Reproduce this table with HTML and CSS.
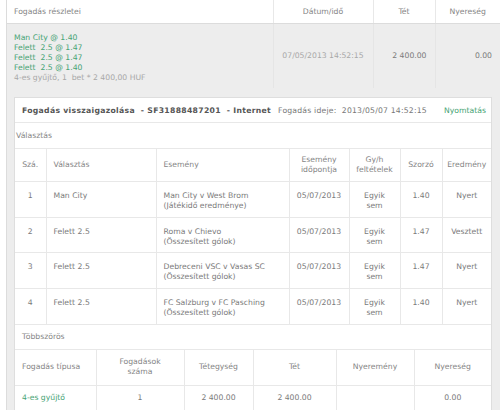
FILE: index.html
```html
<!DOCTYPE html>
<html lang="hu">
<head>
<meta charset="utf-8">
<link rel="stylesheet" href="styles.css">
</head>
<body>
<div class="page">
  <table class="summary">
    <colgroup><col class="s1"><col class="s2"><col class="s3"><col class="s4"></colgroup>
    <tr class="sum-head">
      <th class="left">Fogadás részletei</th>
      <th>Dátum/idő</th>
      <th>Tét</th>
      <th>Nyereség</th>
    </tr>
    <tr class="sum-row">
      <td class="legs">
        <div class="green">Man City @ 1.40</div>
        <div class="green">Felett&nbsp; 2.5 @ 1.47</div>
        <div class="green">Felett&nbsp; 2.5 @ 1.47</div>
        <div class="green">Felett&nbsp; 2.5 @ 1.40</div>
        <div class="faint">4-es gyűjtő, 1&nbsp; bet * 2 400,00 HUF</div>
      </td>
      <td class="center faint">07/05/2013 14:52:15</td>
      <td class="right">2 400.00</td>
      <td class="right">0.00</td>
    </tr>
  </table>

  <div class="panel">
    <div class="panel-head">
      <span class="title">Fogadás visszaigazolása&nbsp; - SF31888487201&nbsp; - Internet</span>
      <span class="time">Fogadás ideje:&nbsp; 2013/05/07 14:52:15</span>
      <span class="print">Nyomtatás</span>
    </div>
    <div class="section sec-a">Választás</div>
    <table class="sel">
      <colgroup><col class="c1"><col class="c2"><col class="c3"><col class="c4"><col class="c5"><col class="c6"><col class="c7"></colgroup>
      <tr class="head">
        <th>Szá.</th>
        <th class="left">Választás</th>
        <th class="left">Esemény</th>
        <th>Esemény<br>időpontja</th>
        <th>Gy/h<br>feltételek</th>
        <th>Szorzó</th>
        <th>Eredmény</th>
      </tr>
      <tr>
        <td>1</td><td class="left">Man City</td><td class="left">Man City v West Brom<br>(Játékidő eredménye)</td><td>05/07/2013</td><td>Egyik<br>sem</td><td>1.40</td><td>Nyert</td>
      </tr>
      <tr>
        <td>2</td><td class="left">Felett 2.5</td><td class="left">Roma v Chievo<br>(Összesített gólok)</td><td>05/07/2013</td><td>Egyik<br>sem</td><td>1.47</td><td>Vesztett</td>
      </tr>
      <tr>
        <td>3</td><td class="left">Felett 2.5</td><td class="left">Debreceni VSC v Vasas SC<br>(Összesített gólok)</td><td>05/07/2013</td><td>Egyik<br>sem</td><td>1.47</td><td>Nyert</td>
      </tr>
      <tr>
        <td>4</td><td class="left">Felett 2.5</td><td class="left">FC Salzburg v FC Pasching<br>(Összesített gólok)</td><td>05/07/2013</td><td>Egyik<br>sem</td><td>1.40</td><td>Nyert</td>
      </tr>
    </table>
    <div class="section sec-b">Többszörös</div>
    <table class="multi">
      <colgroup><col class="m1"><col class="m2"><col class="m3"><col class="m4"><col class="m5"><col class="m6"></colgroup>
      <tr class="head">
        <th class="left">Fogadás típusa</th>
        <th>Fogadások<br>száma</th>
        <th>Tétegység</th>
        <th>Tét</th>
        <th>Nyeremény</th>
        <th>Nyereség</th>
      </tr>
      <tr class="mrow">
        <td class="left green">4-es gyűjtő</td>
        <td>1</td>
        <td>2 400.00</td>
        <td>2 400.00</td>
        <td></td>
        <td>0.00</td>
      </tr>
    </table>
  </div>
</div>
</body>
</html>
```
FILE: styles.css
```css
* { box-sizing: border-box; }
html, body { margin: 0; padding: 0; background: #ffffff; }
body {
  font-family: "DejaVu Sans", Verdana, sans-serif;
  font-size: 7.7px;
  color: #7a7a7a;
  height: 410px;
  overflow: hidden;
}
.page {
  margin-left: 6px;
  border-left: 1px solid #dcdcdc;
  background: #ededed;
  min-height: 410px;
}
table {
  border-collapse: collapse;
  table-layout: fixed;
}
th { font-weight: normal; }
.summary { width: 493px; }
.s1 { width: 266px; }
.s2 { width: 100px; }
.s3 { width: 62px; }
.s4 { width: 65px; }
.sum-head th {
  height: 23px;
  background: #fff;
  color: #858585;
  text-align: center;
  border-left: 1px solid #e8e8e8;
  border-bottom: 1px solid #dcdcdc;
  padding: 0;
}
.sum-head th.left { text-align: left; padding-left: 7px; border-left: 0; }
.sum-row td {
  height: 65px;
  vertical-align: middle;
  border-left: 1px solid #e5e5e5;
  padding: 0;
}
.sum-row td.legs { border-left: 0; padding: 4px 0 0 7px; line-height: 10px; }
.center { text-align: center; }
.right { text-align: right; padding-right: 8px !important; }
.green { color: #46a374; }
.faint { color: #a8a8a8; }

.panel {
  margin: 9px 8px 0 7px;
  background: #fff;
  border: 1px solid #dedede;
  border-bottom: 0;
}
.panel-head {
  display: flex;
  align-items: center;
  height: 25px;
  padding: 0 5px 0 7px;
  border-bottom: 1px solid #e8e8e8;
}
.title { font-weight: bold; color: #555; letter-spacing: 0.3px; }
.time { margin-left: 7px; color: #777; letter-spacing: 0.2px; }
.print { margin-left: auto; color: #46a374; }
.section {
  height: 25px;
  display: flex;
  align-items: center;
  color: #858585;
}
.sec-a { padding-left: 1px; }
.sec-b { padding-left: 7px; border-top: 1px solid #e8e8e8; }

.sel, .multi { width: 476px; }
.c1 { width: 31px; }
.c2 { width: 110px; }
.c3 { width: 133px; }
.c4 { width: 60px; }
.c5 { width: 51px; }
.c6 { width: 42px; }
.c7 { width: 49px; }
.sel td, .sel th, .multi td, .multi th {
  border: 1px solid #e8e8e8;
  text-align: center;
  padding: 0 2px;
  line-height: 10px;
}
.sel tr td:first-child, .sel tr th:first-child,
.multi tr td:first-child, .multi tr th:first-child { border-left: 0; }
.sel tr td:last-child, .sel tr th:last-child,
.multi tr td:last-child, .multi tr th:last-child { border-right: 0; }
.sel th.left, .sel td.left, .multi th.left, .multi td.left { text-align: left; padding-left: 7px; }
.sel .head th { height: 33px; vertical-align: middle; color: #858585; }
.sel td { height: 35.5px; vertical-align: top; padding-top: 9px; }
.sel tr:last-child td { border-bottom: 0; }
.m1 { width: 81px; }
.m2 { width: 88px; }
.m3 { width: 69px; }
.m4 { width: 83px; }
.m5 { width: 78px; }
.m6 { width: 77px; }
.multi .head th { height: 36px; vertical-align: middle; color: #858585; }
.multi td { height: 25px; vertical-align: middle; }
```
